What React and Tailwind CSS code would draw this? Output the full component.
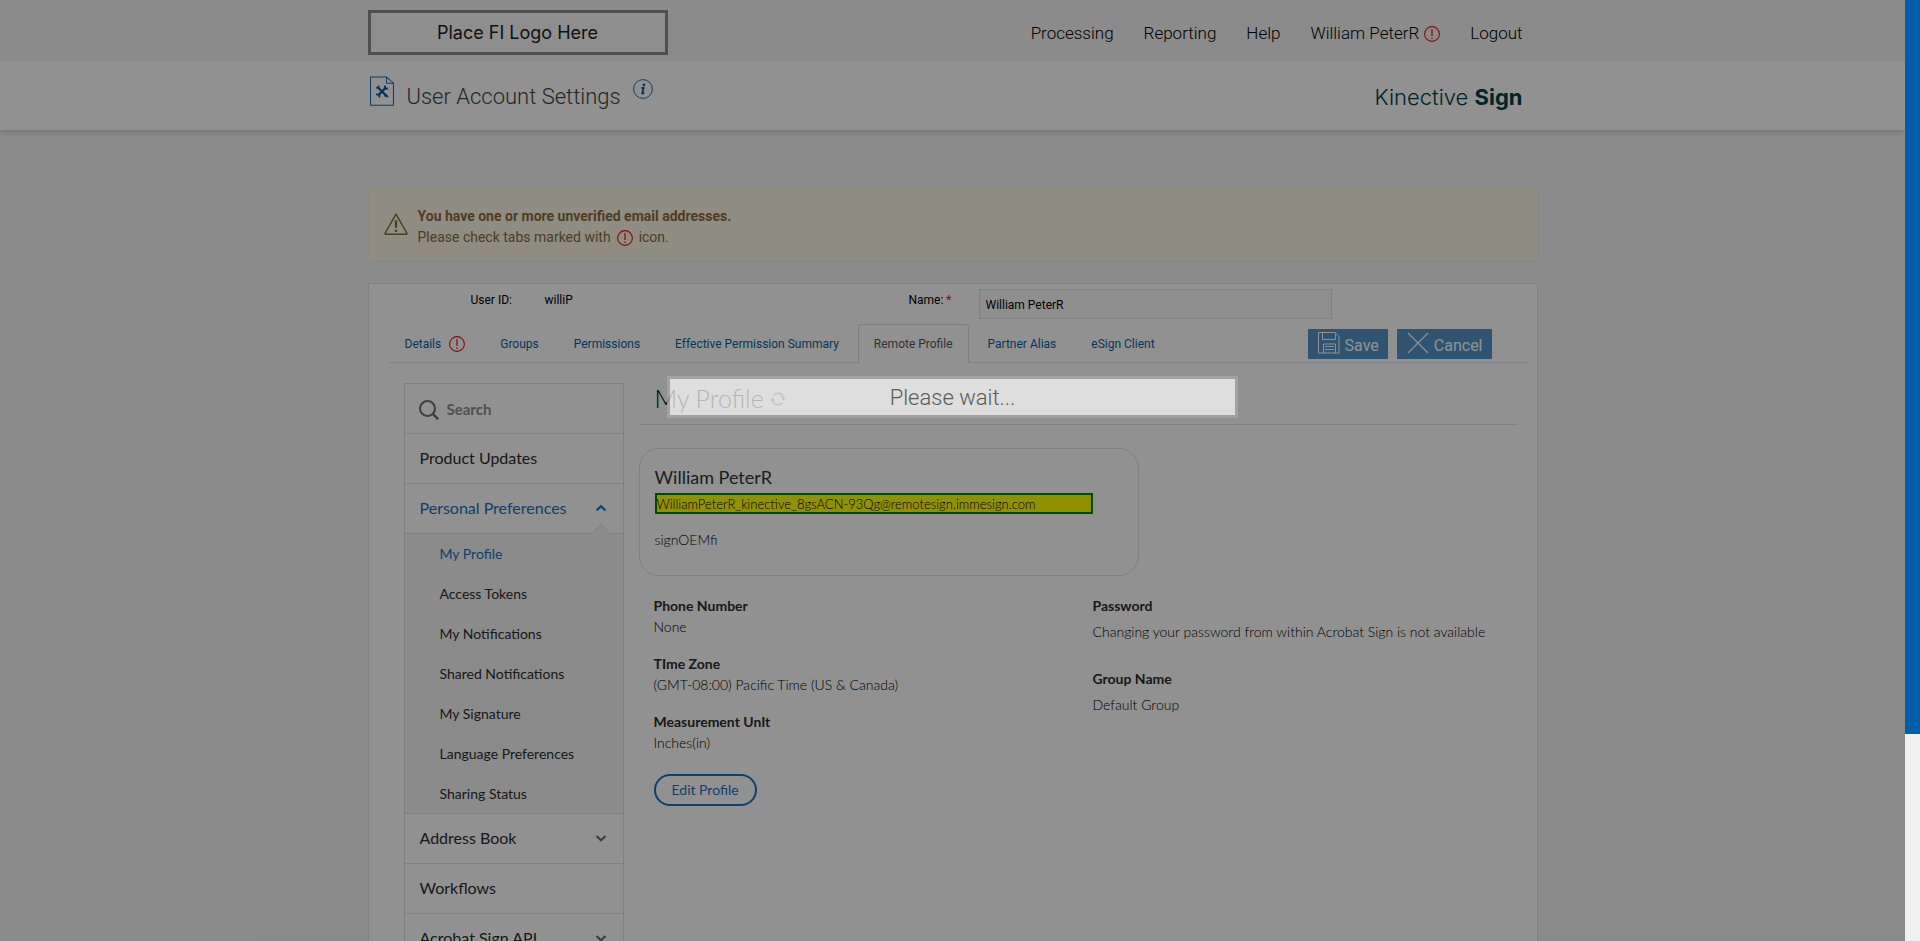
import React from 'react';

const navLinks = ['Processing', 'Reporting', 'Help', 'William PeterR', 'Logout'];

const tabs = [
  { name: 'Details', alert: true },
  { name: 'Groups' },
  { name: 'Permissions' },
  { name: 'Effective Permission Summary' },
  { name: 'Remote Profile', active: true },
  { name: 'Partner Alias' },
  { name: 'eSign Client' },
];

const preferences = [
  'My Profile',
  'Access Tokens',
  'My Notifications',
  'Shared Notifications',
  'My Signature',
  'Language Preferences',
  'Sharing Status',
];

const AlertIcon = () => (
  <svg className="h-4 w-4 shrink-0" viewBox="0 0 16 16" fill="none" stroke="#f01010" aria-hidden="true">
    <circle cx="8" cy="8" r="7.4" strokeWidth="1.1" />
    <path d="M8 3v7M8 11.6v1.4" strokeWidth="1.2" />
  </svg>
);

const SettingsIcon = () => (
  <svg className="h-[30px] w-6 shrink-0" viewBox="0 0 24 30" fill="none" stroke="#1d6fae" aria-hidden="true">
    <path d="M.5 1h16l7 6.200V29.200H.5zM16.500 1v6.200h7" strokeWidth="1.100" />
    <g stroke="#0a5c9e">
      <path d="M8.500 12l7 7M16 11.500L8 19.500" strokeWidth="2.300" />
      <path d="M6.200 11.800h2.300V9.500M15 9.500l-.3 3.300 3.300-.3M6 18.300l3.200.2.200 3M14.500 20.500l1.500-1.500 2 2" strokeWidth="1.800" />
    </g>
  </svg>
);

const InfoIcon = () => (
  <svg className="h-5 w-5 shrink-0" viewBox="0 0 20 20" fill="none" stroke="#1d6fae" aria-hidden="true">
    <circle cx="10" cy="10" r="9.400" strokeWidth="1" />
    <circle cx="10.900" cy="5.900" r="1.400" fill="#0a5c9e" stroke="none" />
    <path d="M8.300 8.900h2.200L9.300 14.200h2" stroke="#0a5c9e" strokeWidth="1.900" />
  </svg>
);

const WarningIcon = () => (
  <svg className="mb-1 h-6 w-6 shrink-0" viewBox="0 0 24 24" fill="none" stroke="#8a6d3b" aria-hidden="true">
    <path d="M12 2.200L23 21.300a.8.8 0 0 1-.6 1H1.600a.8.8 0 0 1-.6-1z" strokeWidth="1.400" strokeLinejoin="round" />
    <path d="M12 8.300v7.400M12 17.700v2.400" strokeWidth="2.300" />
  </svg>
);

const SaveIcon = () => (
  <svg className="mb-0.5 h-[22px] w-[22px]" viewBox="0 0 22 22" fill="none" stroke="#fff" strokeWidth="1" aria-hidden="true">
    <path d="M.5.500h16.500l4 4v16.500H.5zM4.500.500v7h13V.500M5.500 21v-9h12v9M7 14.500h9M7 17.500h9" />
  </svg>
);

const CancelIcon = () => (
  <svg className="mb-0.5 h-[22px] w-[22px]" viewBox="0 0 22 22" fill="none" stroke="#fff" strokeWidth="1.100" aria-hidden="true">
    <path d="M1 1l20 20M21 1L1 21" />
  </svg>
);

const SearchIcon = () => (
  <svg className="h-5 w-5 shrink-0" viewBox="0 0 20 20" fill="none" stroke="#6e6e6e" strokeWidth="2" aria-hidden="true">
    <circle cx="8.500" cy="8.500" r="7.500" />
    <path d="M13.800 13.800l5.400 5.400" strokeWidth="2.600" />
  </svg>
);

const RefreshIcon = () => (
  <svg className="h-4 w-4" viewBox="0 0 16 16" fill="none" stroke="#6e6e6e" strokeWidth="1.600" aria-hidden="true">
    <path d="M3.300 4.600A5.600 5.600 0 0 1 13.400 7M12.700 11.400A5.600 5.600 0 0 1 2.600 9" />
    <path d="M10.800 6.200H16l-2.600 3.200zM0 9.800h5.200L2.600 6.600z" fill="#6e6e6e" stroke="none" />
  </svg>
);

const Chevron = ({ up }) => (
  <svg className="h-3 w-3" viewBox="0 0 12 12" fill="none" stroke={up ? '#1473c8' : '#6e6e6e'} strokeWidth="2.200" aria-hidden="true">
    <path d={up ? 'M1.500 8.500L6 4.200l4.500 4.300' : 'M1.500 4l4.500 4.300L10.500 4'} />
  </svg>
);

const MenuRow = ({ name, expandable, expanded }) => (
  <a
    href="#"
    className={`relative flex h-[50px] items-center justify-between border-b border-[#e1e1e1] pr-4 pb-0.5 pl-[15px] text-base ${expanded ? 'text-[#1a6fc0]' : 'text-[#2c2c2c]'}`}
  >
    {name}
    {expandable && <Chevron up={expanded} />}
    {expanded && (
      <svg className="absolute right-[12px] -bottom-px h-[10px] w-5" viewBox="0 0 20 10" aria-hidden="true">
        <path d="M0 10L10 0l10 10z" fill="#f5f5f5" />
        <path d="M0 9.500h1L10 .7l9 8.800h1" fill="none" stroke="#e1e1e1" />
      </svg>
    )}
  </a>
);

const Field = ({ label, value, loose }) => (
  <div>
    <dt className="text-sm leading-5 font-bold text-[#2c2c2c]">{label}</dt>
    <dd className={`text-sm font-light text-black ${loose ? 'mt-1.5 leading-5' : 'leading-[22px]'}`}>{value}</dd>
  </div>
);

const Header = () => (
  <header className="relative shadow-[0_2px_6px_rgba(0,0,0,0.15)]">
    <div className="bg-[#f4f4f4]">
      <div className="mx-auto flex h-[62px] max-w-[1170px] items-center justify-between pt-[3px] pr-[15px]">
        <div className="flex h-[45px] w-[300px] items-center justify-center border-3 border-[#8b8b8b] bg-[#fafafa] font-['Inter',sans-serif] text-lg text-[#1c1c1c]">
          Place FI Logo Here
        </div>
        <nav className="flex items-center gap-[30px] pt-[3px] text-[17px] font-light text-black">
          {navLinks.map((name) => (
            <a key={name} href="#" className="flex items-center gap-[5px]">
              {name}
              {name === 'William PeterR' && <AlertIcon />}
            </a>
          ))}
        </nav>
      </div>
    </div>
    <div className="bg-white">
      <div className="mx-auto flex h-[68px] max-w-[1170px] items-center justify-between pr-[15px]">
        <div className="flex items-start pb-1 pl-0.5">
          <SettingsIcon />
          <h1 className="ml-[13px] pt-1.5 text-[22px] leading-[30px] font-light text-[#444]">User Account Settings</h1>
          <span className="ml-3 pt-[3px]">
            <InfoIcon />
          </span>
        </div>
        <div className="pt-0.5 font-['Inter',sans-serif] text-[22px] font-light text-[#004046]">
          Kinective <span className="font-bold">Sign</span>
        </div>
      </div>
    </div>
  </header>
);

const Sidebar = () => (
  <aside className="w-[220px] shrink-0 border border-[#e1e1e1]">
    <div className="flex h-[50px] items-center gap-2 border-b border-[#e1e1e1] px-3.5 pt-0.5">
      <SearchIcon />
      <input
        type="search"
        aria-label="Search"
        placeholder="Search"
        className="w-full bg-transparent text-[15px] font-bold outline-none placeholder:text-[#8e8e8e]"
      />
    </div>
    <MenuRow name="Product Updates" />
    <MenuRow name="Personal Preferences" expandable expanded />
    <ul className="h-[280px] border-b border-[#e1e1e1] bg-[#f5f5f5]">
      {preferences.map((name, i) => (
        <li key={name}>
          <a href="#" className={`flex h-10 items-center pl-[35px] text-sm ${i === 0 ? 'text-[#1a6fc0]' : 'text-[#2c2c2c]'}`}>
            {name}
          </a>
        </li>
      ))}
    </ul>
    <MenuRow name="Address Book" expandable />
    <MenuRow name="Workflows" />
    <MenuRow name="Acrobat Sign API" expandable />
  </aside>
);

const Profile = () => (
  <main className="ml-[15px] flex-1">
    <div className="flex h-[42px] items-center gap-1.5 border-b border-[#e1e1e1] pb-2.5 pl-4">
      <h2 className="text-[25px] font-light text-black">My Profile</h2>
      <RefreshIcon />
    </div>
    <section className="mt-[23px] h-32 max-w-[500px] rounded-[20px] border border-[#e1e1e1] pt-4 pr-[45px] pl-[15px]">
      <h3 className="mb-1 text-lg leading-6 text-[#333]">William PeterR</h3>
      <p className="h-[21px] border-2 border-[#008000] bg-[#ffff00] text-[13px] leading-[18px] font-light text-black">
        WilliamPeterR_kinective_8gsACN-93Qg@remotesign.immesign.com
      </p>
      <p className="mt-4 text-sm leading-5 font-light text-black">signOEMfi</p>
    </section>
    <div className="mt-5 flex pl-[15px]">
      <div className="w-[439px]">
        <dl className="space-y-4">
          <Field label="Phone Number" value="None" />
          <Field label="TIme Zone" value="(GMT-08:00) Pacific Time (US & Canada)" />
          <Field label="Measurement UnIt" value="Inches(in)" />
        </dl>
        <button className="mt-5 h-8 rounded-full border-2 border-[#1a6fc0] px-4 text-sm text-[#1a6fc0]">
          Edit Profile
        </button>
      </div>
      <dl className="space-y-[27px]">
        <Field label="Password" value="Changing your password from within Acrobat Sign is not available" loose />
        <Field label="Group Name" value="Default Group" loose />
      </dl>
    </div>
  </main>
);

const App = () => {
  return (
    <div className="flex h-screen overflow-hidden font-['Roboto',sans-serif]">
      <div className="relative flex-1 overflow-hidden bg-[#f3f3f3]">
        <Header />

        <div className="mx-auto max-w-[1170px] pt-[60px]">
          <div className="flex h-[72px] items-center gap-2.5 rounded-[4px] border border-[#faebcc] bg-[#fcf8e3] px-[15px] text-sm text-[#8a6d3b]">
            <WarningIcon />
            <div className="pt-0.5 leading-[21px]">
              <p className="font-bold">You have one or more unverified email addresses.</p>
              <p className="flex items-center gap-1.5">
                Please check tabs marked with <AlertIcon /> icon.
              </p>
            </div>
          </div>

          <div className="mt-[21px] border border-[#e1e1e1] bg-white pb-10">
            <div className="flex h-10 items-start pt-[5px] text-xs text-black">
              <div className="w-[176px] pt-[3px] pl-[102px]">User ID:</div>
              <div className="w-[364px] pt-[3px]">williP</div>
              <label htmlFor="name" className="w-[70px] pt-[3px]">
                Name: <span className="text-[#f00]">*</span>
              </label>
              <input
                id="name"
                type="text"
                defaultValue="William PeterR"
                className="h-[30px] w-[353px] border border-[#e1e1e1] bg-[#fafafa] px-1.5 pt-0.5"
              />
            </div>

            <div className="mr-[9px] ml-5 flex items-end justify-between border-b border-[#e1e1e1] pr-9 text-xs">
              <nav className="-mb-px flex gap-[3px]">
                {tabs.map((tab) => (
                  <a
                    key={tab.name}
                    href="#"
                    className={`flex h-[39px] items-center gap-2 rounded-t-[4px] px-[15px] ${tab.active ? 'border border-b-0 border-[#dcdcdc] bg-white text-[#555]' : 'border border-b-0 border-transparent text-[#005fa9]'}`}
                  >
                    {tab.name}
                    {tab.alert && <AlertIcon />}
                  </a>
                ))}
              </nav>
              <div className="mb-[3px] flex gap-[9px] text-base text-white">
                <button className="flex h-[30px] items-center gap-[5px] bg-[#5693c8] px-2.5 pr-[9px]">
                  <SaveIcon />
                  <span className="pt-1">Save</span>
                </button>
                <button className="flex h-[30px] items-center gap-[5px] bg-[#5693c8] px-2.5 pr-[9px]">
                  <CancelIcon />
                  <span className="pt-1">Cancel</span>
                </button>
              </div>
            </div>

            <div className="mt-5 mr-[19px] ml-[35px] flex font-['Lato',sans-serif]">
              <Sidebar />
              <Profile />
            </div>
          </div>
        </div>

        <div className="absolute inset-0 bg-black/43" />
        <div
          role="status"
          className="absolute top-[40%] left-[35%] flex h-[42px] w-[30%] items-center justify-center border-3 border-[#aaa] bg-white text-[22px] font-light text-[#444] opacity-70"
        >
          Please wait...
        </div>
      </div>

      {/* page scrollbar */}
      <div className="w-[15px] bg-[#f0f0f0]">
        <div className="h-[78%] bg-[#005da9]" />
      </div>
    </div>
  );
};

export default App;
